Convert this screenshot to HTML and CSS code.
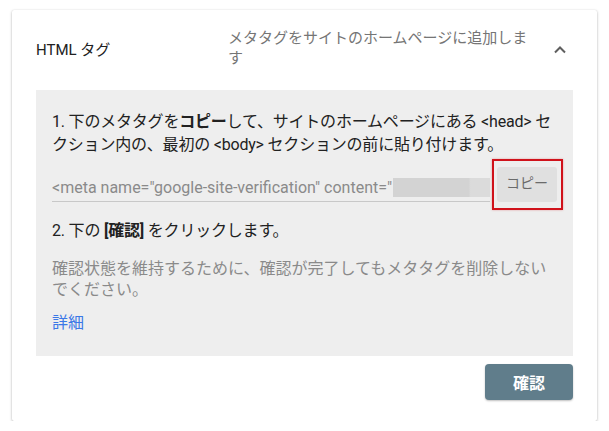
FILE: index.html
```html
<!DOCTYPE html>
<html lang="ja">
<head>
<meta charset="utf-8">
<title>HTML タグ</title>
<link rel="stylesheet" href="styles.css">
</head>
<body>
<div class="card">
  <div class="header">
    <div class="title">HTML タグ</div>
    <div class="desc">メタタグをサイトのホームページに追加します</div>
    <div class="chev">
      <svg width="14" height="9" viewBox="0 0 14 9"><polyline points="2,7.5 7,2.5 12,7.5" fill="none" stroke="#5f5f5f" stroke-width="2"/></svg>
    </div>
  </div>
  <div class="panel">
    <p class="step step1">1. 下のメタタグを<b>コピー</b>して、サイトのホームページにある &lt;head&gt; セクション内の、最初の &lt;body&gt; セクションの前に貼り付けます。</p>
    <div class="meta-row">
      <div class="meta-field">
        <span class="meta-text">&lt;meta name="google-site-verification" content="</span><span class="blur"></span>
      </div>
      <div class="highlight"><button class="copy">コピー</button></div>
    </div>
    <p class="step step2">2. 下の <b>[確認]</b> をクリックします。</p>
    <p class="note">確認状態を維持するために、確認が完了してもメタタグを削除しないでください。</p>
    <a class="more" href="#">詳細</a>
  </div>
  <div class="actions">
    <button class="confirm">確認</button>
  </div>
</div>
</body>
</html>
```
FILE: styles.css
```css
* { box-sizing: border-box; }
html, body { margin: 0; background: #ffffff; }
body {
  padding: 10px 12px 0 12px;
  font-family: "Roboto", "Noto Sans CJK JP", sans-serif;
  color: #212121;
}
.card {
  width: 585px;
  height: 411px;
  background: #fff;
  box-shadow: 0 1px 3px rgba(0,0,0,0.28), 0 0 1px rgba(0,0,0,0.12);
  border-radius: 2px;
}
.header {
  height: 80px;
  display: flex;
  align-items: center;
  padding: 0 0 4px 24px;
}
.title {
  width: 192px;
  font-size: 15px;
  color: #212121;
}
.desc {
  width: 308px;
  font-size: 15px;
  line-height: 20px;
  color: #757575;
}
.chev {
  margin-left: 16px;
  width: 16px;
  display: flex;
  justify-content: center;
  padding-top: 2px;
}
.panel {
  margin: 0 24px;
  background: #eeeeee;
  padding: 20px 16px 22px 16px;
  height: 266px;
}
.step {
  margin: 0;
  font-size: 16px;
  line-height: 23px;
  color: #212121;
  letter-spacing: -0.2px;
}
.step b { font-weight: 700; }
.meta-row {
  display: flex;
  align-items: flex-end;
  margin-top: 3px;
  margin-right: -6px;
}
.meta-field {
  flex: 1;
  display: flex;
  align-items: center;
  border-bottom: 1px solid #c8c8c8;
  height: 28px;
  margin-bottom: 8px;
  overflow: hidden;
  white-space: nowrap;
}
.meta-text {
  font-size: 16px;
  color: #8a8a8a;
  flex: none;
}
.blur {
  flex: 1;
  height: 19px;
  margin-left: 1px;
  background: linear-gradient(90deg, #d3d3d3 0%, #d3d3d3 78%, #dbdbdb 80%, #dbdbdb 100%);
}
.highlight {
  margin-left: 2px;
  border: 2px solid #d0121b;
  box-shadow: 0 0 2px rgba(208,18,27,0.35);
  padding: 6px 4px 6px 3px;
}
.copy {
  display: block;
  width: 60px;
  height: 35px;
  border: 0;
  border-radius: 3px;
  background: #e0e0e0;
  color: #6b6b6b;
  font-family: "Roboto", "Noto Sans CJK JP", sans-serif;
  font-size: 14px;
  padding: 0 0 6px 0;
}
.step2 { margin-top: 9px; }
.note {
  margin: 16px 0 0 0;
  font-size: 16px;
  line-height: 21px;
  color: #8a8a8a;
}
.more {
  display: block;
  margin-top: 12px;
  font-size: 16px;
  line-height: 21px;
  color: #3b78e7;
  text-decoration: none;
}
.actions {
  display: flex;
  justify-content: flex-end;
  padding: 8px 24px 0 0;
}
.confirm {
  width: 88px;
  height: 36px;
  border: 0;
  border-radius: 4px;
  background: #607d8b;
  color: #ffffff;
  font-family: "Roboto", "Noto Sans CJK JP", sans-serif;
  font-size: 16px;
  font-weight: 700;
  box-shadow: 0 1px 2px rgba(0,0,0,0.25);
}
```
